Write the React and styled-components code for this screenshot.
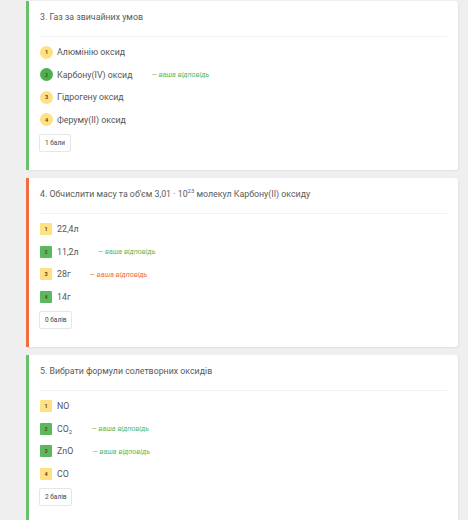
import React from 'react'
import styled, { createGlobalStyle } from 'styled-components'

const GlobalStyle = createGlobalStyle`
  body {
    margin: 0;
    background: #efefef;
    font-family: Roboto, "Liberation Sans", Arial, sans-serif;
  }
`

const questions = [
  {
    title: '3. Газ за звичайних умов',
    status: 'correct',
    shape: 'circle',
    score: '1 бали',
    options: [
      { text: 'Алюмінію оксид', kind: 'yellow' },
      { text: 'Карбону(IV) оксид', kind: 'greenDark', answer: 'correct' },
      { text: 'Гідрогену оксид', kind: 'yellow' },
      { text: 'Феруму(II) оксид', kind: 'yellow' },
    ],
  },
  {
    title: (
      <>
        4. Обчислити масу та об'єм 3,01 · 10<sup>23</sup> молекул Карбону(II) оксиду
      </>
    ),
    status: 'wrong',
    shape: 'square',
    score: '0 балів',
    options: [
      { text: '22,4л', kind: 'yellow' },
      { text: '11,2л', kind: 'green', answer: 'correct' },
      { text: '28г', kind: 'yellow', answer: 'wrong' },
      { text: '14г', kind: 'green' },
    ],
  },
  {
    title: '5. Вибрати формули солетворних оксидів',
    status: 'correct',
    shape: 'square',
    score: '2 балів',
    options: [
      { text: 'NO', kind: 'yellow' },
      { text: <>CO<sub>2</sub></>, kind: 'green', answer: 'correct' },
      { text: 'ZnO', kind: 'green', answer: 'correct' },
      { text: 'CO', kind: 'yellow' },
    ],
  },
]

const App = () => (
  <Page>
    <GlobalStyle />
    {questions.map((q, i) => (
      <Card key={i} status={q.status}>
        <Title>{q.title}</Title>
        <Divider />
        <Options>
          {q.options.map((o, j) => (
            <Option key={j}>
              <Badge shape={q.shape} kind={o.kind}>{j + 1}</Badge>
              <OptionText>{o.text}</OptionText>
              {o.answer && <Answer status={o.answer}>— ваша відповідь</Answer>}
            </Option>
          ))}
        </Options>
        <Score>{q.score}</Score>
      </Card>
    ))}
  </Page>
)

export default App

const Page = styled.div`
  display: flex;
  flex-direction: column;
  gap: 8px;
  padding: 1px 10px 20px 26px;
`

const Card = styled.div`
  background: #fff;
  border-left: 3px solid ${props => props.status === 'wrong' ? '#f26c3d' : '#68c06c'};
  border-radius: 0 3px 3px 0;
  box-shadow: 1px 1px 2px rgba(0, 0, 0, 0.06);
  padding: 0 11px 16px 11px;
  height: 169px;
  box-sizing: border-box;
  display: flex;
  flex-direction: column;
`

const Title = styled.div`
  font-size: 8.8px;
  color: #5a5a5a;
  height: 35px;
  line-height: 33px;
  sup {
    font-size: 6px;
    line-height: 0;
  }
`

const Divider = styled.div`
  height: 1px;
  background: #f2f2f2;
`

const Options = styled.div`
  display: flex;
  flex-direction: column;
  padding-top: 4px;
`

const Option = styled.div`
  display: flex;
  align-items: center;
  height: 22.5px;
`

const badgeColors = {
  yellow: '#ffe082',
  green: '#5cb85c',
  greenDark: '#4caf50',
}

const Badge = styled.div`
  width: ${props => props.shape === 'circle' ? '13px' : '12px'};
  height: ${props => props.shape === 'circle' ? '13px' : '12px'};
  flex: none;
  border-radius: ${props => props.shape === 'circle' ? '50%' : '1px'};
  background: ${props => badgeColors[props.kind]};
  color: #5a4a1a;
  font-size: 5.5px;
  font-weight: bold;
  display: flex;
  align-items: center;
  justify-content: center;
  margin-right: ${props => props.shape === 'circle' ? '4px' : '5px'};
`

const OptionText = styled.div`
  font-size: 8.8px;
  color: #555;
  sub {
    font-size: 6px;
    line-height: 0;
    vertical-align: -2px;
  }
`

const Answer = styled.div`
  margin-left: 19px;
  font-size: 7.2px;
  font-style: italic;
  color: ${props => props.status === 'wrong' ? '#f26c3d' : '#5cb85c'};
`

const Score = styled.div`
  align-self: flex-start;
  margin-top: 3px;
  margin-left: -1px;
  height: 18px;
  line-height: 16px;
  padding: 0 5px;
  border: 1px solid #e6e6e6;
  border-radius: 2px;
  font-size: 6.5px;
  color: #444;
  box-sizing: border-box;
`
